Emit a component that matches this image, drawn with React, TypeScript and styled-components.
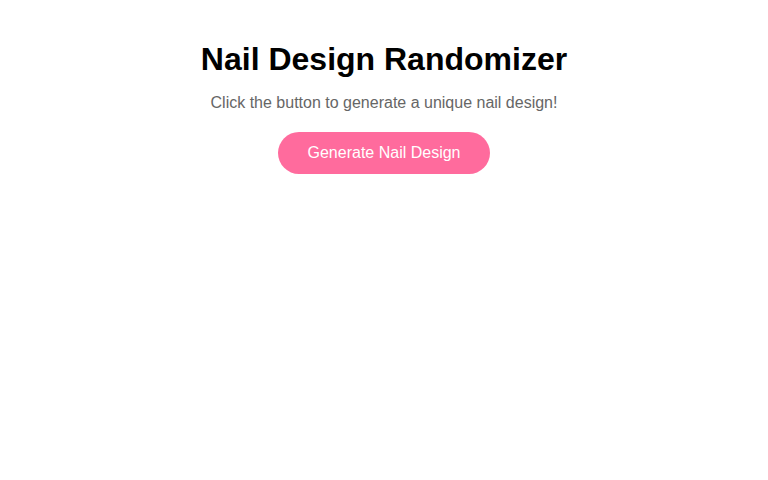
import React from 'react'
import styled, { createGlobalStyle } from 'styled-components'

const GlobalStyle = createGlobalStyle`
    body {
        margin: 0;
        background: #ffffff;
        font-family: "Liberation Sans", Arial, sans-serif;
    }
`

const Page = styled.div`
    display: flex;
    flex-direction: column;
    align-items: center;
    text-align: center;
    padding: 41px 20px 20px;
`

const Title = styled.h1`
    margin: 0 0 16px;
    font-size: 32px;
    font-weight: bold;
    color: #000;
`

const Subtitle = styled.p`
    margin: 0 0 20px;
    font-size: 16px;
    color: #666;
`

const GenerateButton = styled.button`
    font-family: inherit;
    font-size: 16px;
    color: #fff;
    background: #ff6b9d;
    border: none;
    border-radius: 25px;
    padding: 12px 30px;
    cursor: pointer;
`

const App = () => {
    return (
        <>
            <GlobalStyle />
            <Page>
                <Title>Nail Design Randomizer</Title>
                <Subtitle>Click the button to generate a unique nail design!</Subtitle>
                <GenerateButton>Generate Nail Design</GenerateButton>
            </Page>
        </>
    )
}

export default App
